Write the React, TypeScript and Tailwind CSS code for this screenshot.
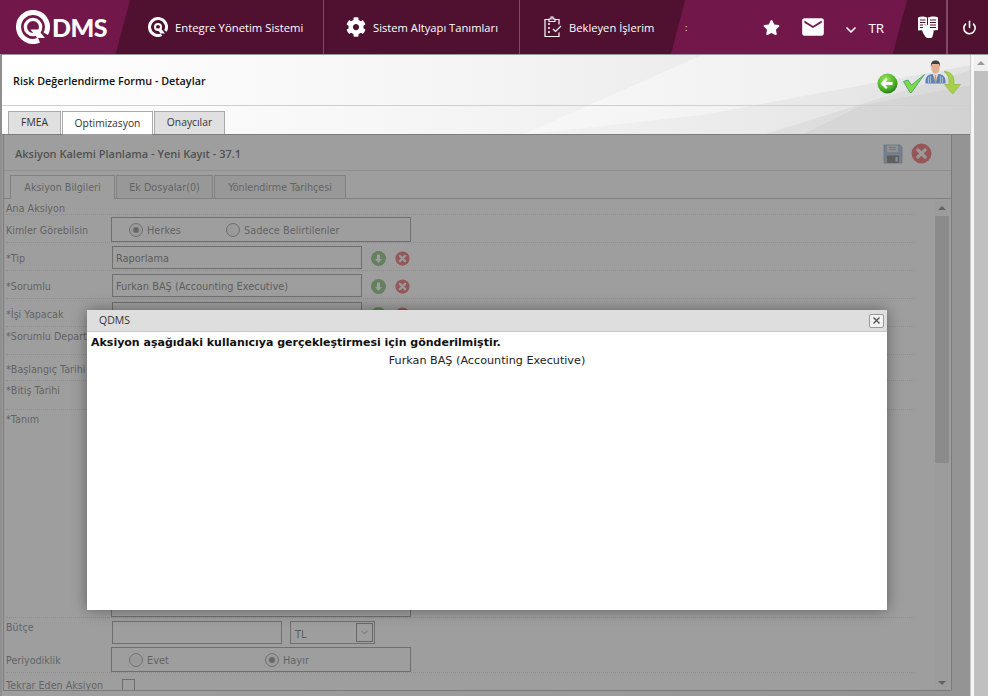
import React from 'react';
import { FaCog, FaStar } from 'react-icons/fa';
import { MdMail } from 'react-icons/md';
import { ChevronDown, Power } from 'lucide-react';

const sans = 'font-["Open_Sans","Noto_Sans",sans-serif]';
const deja = 'font-["DejaVu_Sans",sans-serif]';

function QMark({ size = 20, hole = 5 }: { size?: number; hole?: number }) {
  return (
    <svg width={size} height={size} viewBox="0 0 40 40" fill="none">
      <path d="M27 35.500A17 17 0 1 1 35 28" stroke="#fff" strokeWidth="6" />
      <circle cx="20" cy="20" r={hole + 3} stroke="#fff" strokeWidth="4" />
      <path d="M17 23h9l8 10h-9z" fill="#fff" />
    </svg>
  );
}

function ClipboardIcon() {
  return (
    <svg width="20" height="22" viewBox="0 0 20 22" fill="none" stroke="#fff" strokeWidth="1.2">
      <path d="M6 3.500H2v17h14v-4M12 3.500h4v5" />
      <path d="M6 5.500V3h2V1h2v2h2v2.500z" />
      <path d="M5 8h2M5 12h2M5 16h2" strokeWidth="1.6" />
      <path d="M10 13l2.500 2.500L18 10" />
    </svg>
  );
}

function BookHand() {
  return (
    <svg width="22" height="24" viewBox="0 0 22 24">
      <path d="M1 2.500C4 1 8 1 10.500 3 13 1 18 1 21 2.500V15l-5 .5-2 2-5-1-2-1.500-6 .500z" fill="#fff" />
      <path
        d="M3 5h5.500M3 7.500h5.500M3 10h5.500M3 12.500h4M13 5h6M13 7.500h6M13 10h6M13 12.500h6"
        stroke="#4f112f"
        strokeWidth="1"
      />
      <path d="M10.500 3v10" stroke="#4f112f" strokeWidth="1" />
      <path
        d="M6 9.500c1-.5 1.500 0 2 1l1 3 .5-3c.5-1 1.500-1 2 0l.5 3 3.500 1c1 .5 1.500 1.500 1 3l-1 4c-.5 1-1 1.500-2 1.500H11c-1.500 0-2.500-1-3-2l-2-3-1-3c0-1 .5-2 1-2.500z"
        fill="#fff"
      />
    </svg>
  );
}

function BackIcon() {
  return (
    <svg width="21" height="21" viewBox="0 0 21 21">
      <defs>
        <radialGradient id="bk" cx="0.4" cy="0.3" r="0.8">
          <stop offset="0" stopColor="#9be85a" />
          <stop offset="0.6" stopColor="#4fb02a" />
          <stop offset="1" stopColor="#12700f" />
        </radialGradient>
      </defs>
      <circle cx="10.500" cy="10.500" r="10" fill="url(#bk)" />
      <path d="M3.500 10.500l5.500-5.500 1.500 1.500-2 2.500h7v3h-7l2 2.500L9 16z" fill="#fff" />
    </svg>
  );
}

function CheckIcon() {
  return (
    <svg width="22" height="19" viewBox="0 0 22 19">
      <path d="M0.500 7.500L5 6l3.500 5L21.500 0.500 8.500 18.500H7z" fill="#7ddb45" stroke="#2f8f6f" strokeWidth="0.700" />
    </svg>
  );
}

function PersonIcon() {
  return (
    <svg width="21" height="24" viewBox="0 0 21 24">
      <path d="M0.500 23.500c-.5-6 1.500-8.500 6.500-9.500l3.500 1 3.500-1c5 1 7 3.500 6.500 9.500z" fill="#5f82bd" />
      <path d="M8 14l2.500 9 2.500-9-2.500 1z" fill="#f0f0f0" />
      <path d="M9.800 15h1.400l.4 6-1.100 2-1-2z" fill="#d99a2a" />
      <path d="M3.500 17v6M5.500 16v7M15.500 16v7M17.500 17v6" stroke="#c5d4ea" strokeWidth="0.700" />
      <ellipse cx="10.500" cy="8" rx="4.200" ry="5.500" fill="#e2b08e" />
      <path d="M6 7C5.500 2 7.500 .500 10.500 .500S15.500 2 15 7L14 4H7z" fill="#3f3f3f" />
    </svg>
  );
}

function DownArrowIcon() {
  return (
    <svg width="19" height="24" viewBox="0 0 19 24">
      <path d="M1 0.500c6 0 10 3 10 10v3h6.500L9.500 23 1.500 13.500H6v-4C6 5.500 4 3 1 .500z" fill="#a5cf4f" stroke="#8bb03a" strokeWidth="0.600" />
    </svg>
  );
}

function SaveIcon() {
  return (
    <svg width="20" height="20" viewBox="0 0 20 20">
      <path d="M1 1h16l2 2v16H1z" fill="#8ea8cf" stroke="#5f7fad" strokeWidth="0.800" />
      <rect x="4" y="1.500" width="11" height="6.500" fill="#d9d9d9" />
      <path d="M6 3.500h7M6 5.500h7" stroke="#8f8f8f" />
      <rect x="4" y="11.500" width="12" height="7.500" fill="#4a4a4a" />
      <rect x="12.500" y="13" width="2" height="4.500" fill="#d9d9d9" />
    </svg>
  );
}

function RoundX({ size = 20 }: { size?: number }) {
  return (
    <svg width={size} height={size} viewBox="0 0 20 20">
      <circle cx="10" cy="10" r="9.500" fill="#e8343a" />
      <path d="M6.500 6.500l7 7M13.500 6.500l-7 7" stroke="#f4f4f4" strokeWidth="3" strokeLinecap="round" />
    </svg>
  );
}

function RoundDown() {
  return (
    <svg width="15" height="15" viewBox="0 0 15 15">
      <circle cx="7.500" cy="7.500" r="7.500" fill="#5aa84a" />
      <path d="M7.500 12L4 8h2V3.500h3V8h2z" fill="#fff" />
    </svg>
  );
}

function Radio({ on }: { on?: boolean }) {
  return (
    <span className="flex w-[14px] h-[14px] rounded-full border border-[#777] bg-[#f4f4f4] items-center justify-center shrink-0">
      {on && <span className="w-[6px] h-[6px] rounded-full bg-[#666]" />}
    </span>
  );
}

function FieldRow({
  label,
  h,
  pt = 'pt-[9px]',
  line = true,
  children,
}: {
  label: string;
  h: string;
  pt?: string;
  line?: boolean;
  children?: React.ReactNode;
}) {
  return (
    <div className={`flex ${h} ${line ? 'border-b border-dotted border-[#cfcfcf]' : ''}`}>
      <div className={`w-[100px] shrink-0 whitespace-nowrap text-[9.6px] leading-[14px] ${pt} text-[#555]`}>
        {label}
      </div>
      {children}
    </div>
  );
}

function TextBox({ value, w = 'w-[250px]' }: { value?: string; w?: string }) {
  return (
    <div className={`${w} h-[23px] ml-[6px] mt-[3px] border border-[#787878] px-[3px] text-[9.8px] leading-[24px] text-[#444] whitespace-nowrap`}>
      {value}
    </div>
  );
}

function LookupButtons() {
  return (
    <div className="flex items-center gap-[9px] ml-[9px] mt-[8px] h-[15px]">
      <RoundDown />
      <RoundX size={15} />
    </div>
  );
}

function RadioBox({ left, right, leftOn, gap }: { left: string; right: string; leftOn?: boolean; gap: string }) {
  return (
    <div className="w-[300px] h-[25px] ml-[5px] mt-[2px] border border-[#787878] flex items-center pl-[17px] text-[9.8px] text-[#555]">
      <div className={`flex items-center gap-[4px] ${gap}`}>
        <Radio on={leftOn} />
        <span className="mt-[3px]">{left}</span>
      </div>
      <div className="flex items-center gap-[4px]">
        <Radio on={!leftOn} />
        <span className="mt-[3px]">{right}</span>
      </div>
    </div>
  );
}

function Form() {
  return (
    <div className="flex-1 min-w-0 overflow-hidden">
      <div className="text-[9.6px] leading-[14px] text-[#555] h-[16px] pt-[3px] border-b border-dotted border-[#cfcfcf]">
        Ana Aksiyon
      </div>
      <FieldRow label="Kimler Görebilsin" h="h-[28px]">
        <RadioBox left="Herkes" right="Sadece Belirtilenler" leftOn gap="w-[97px]" />
      </FieldRow>
      <FieldRow label="*Tip" h="h-[28px]">
        <TextBox value="Raporlama" />
        <LookupButtons />
      </FieldRow>
      <FieldRow label="*Sorumlu" h="h-[28px]">
        <TextBox value="Furkan BAŞ (Accounting Executive)" />
        <LookupButtons />
      </FieldRow>
      <FieldRow label="*İşi Yapacak" h="h-[28px]">
        <TextBox />
        <LookupButtons />
      </FieldRow>
      <FieldRow label="*Sorumlu Departman" h="h-[28px]" pt="pt-[3px]" />
      <FieldRow label="*Başlangıç Tarihi" h="h-[26px]" pt="pt-[8px]" />
      <FieldRow label="*Bitiş Tarihi" h="h-[29px]" pt="pt-[3px]" />
      <FieldRow label="*Tanım" h="h-[208px]" pt="pt-[3px]">
        <div className="w-[300px] h-[207px] ml-[5px] border border-[#787878]" />
      </FieldRow>
      <FieldRow label="Bütçe" h="h-[27px]" pt="pt-[3px]" line={false}>
        <TextBox w="w-[170px]" />
        <div className="w-[85px] h-[23px] ml-[8px] mt-[3px] border border-[#787878] relative pl-[4px] text-[9.8px] leading-[25px] text-[#444]">
          TL
          <span className="absolute right-[1px] top-[1px] w-[17px] h-[19px] border border-[#666] flex items-center justify-center">
            <ChevronDown size={11} color="#666" />
          </span>
        </div>
      </FieldRow>
      <FieldRow label="Periyodiklik" h="h-[28px]">
        <RadioBox left="Evet" right="Hayır" gap="w-[136px]" />
      </FieldRow>
      <FieldRow label="Tekrar Eden Aksiyon" h="h-[18px]" pt="pt-[6px]" line={false}>
        <span className="w-[13px] h-[13px] ml-[16px] mt-[6px] border border-[#777]" />
      </FieldRow>
    </div>
  );
}

export default function App() {
  return (
    <div className={`w-[988px] h-[696px] overflow-hidden relative bg-white ${sans}`}>
      {/* üst menü */}
      <header className="h-[55px] flex bg-[#4f112f] border-b border-[#9a9a9a] text-white relative">
        <div className="w-[130px] flex items-center pl-[16px] gap-[2px] bg-[#72174a] [clip-path:polygon(0_0,100%_0,89%_100%,0_100%)]">
          <QMark size={34} hole={6} />
          <span className='font-["Lato",sans-serif] font-black text-[25px] leading-none tracking-[-0.5px]'>DMS</span>
        </div>
        <div className="w-[194px] flex items-center pl-[18px] gap-[7px] text-[11.3px] border-r border-[#7b4a63]">
          <QMark size={20} hole={3} />
          <span className="mt-[2px]">Entegre Yönetim Sistemi</span>
        </div>
        <div className="w-[196px] flex items-center pl-[22px] gap-[7px] text-[11.2px] border-r border-[#7b4a63]">
          <FaCog size={20} />
          <span className="mt-[2px]">Sistem Altyapı Tanımları</span>
        </div>
        <div className="w-[152px] flex items-center pl-[23px] gap-[6px] text-[11.2px]">
          <ClipboardIcon />
          <span className="mt-[2px]">Bekleyen İşlerim</span>
        </div>
        <div className="w-[236px] -ml-[1px] flex items-center bg-[#72174a] [clip-path:polygon(6%_0,100%_0,94%_100%,0_100%)] text-white">
          <span className="ml-[14px] text-[9px] leading-none">:</span>
          <FaStar size={17} className="ml-[76px]" />
          <MdMail size={26} className="ml-[20px]" />
          <ChevronDown size={16} strokeWidth={2.5} className="ml-[17px] mt-[5px]" />
          <span className="ml-[9px] text-[13.5px] mt-[3px]">TR</span>
        </div>
        <div className="flex-1 flex">
          <div className="w-[41px] flex items-center justify-center pl-[3px] border-r-2 border-[#7b4a63]">
            <BookHand />
          </div>
          <div className="flex-1 flex items-center justify-center pl-[2px]">
            <Power size={15} strokeWidth={2.5} />
          </div>
        </div>
      </header>

      <div className="flex h-[641px]">
        <div className="w-[971px] border-l-2 border-[#8f8f8f] border-r border-r-[#c9c9c9] bg-gradient-to-r from-white via-[#f4f4f4] to-[#e2e2e2] relative overflow-hidden">
          {/* arka plan şekilleri */}
          <svg className="absolute inset-0" width="969" height="641">
            <path d="M520 80L700 0H969L969 10 700 60z" fill="#fff" opacity="0.4" />
            <path d="M760 80L969 15V80z" fill="#000" opacity="0.04" />
            <path d="M800 80L860 50 969 30V80z" fill="#000" opacity="0.03" />
          </svg>
          <div className="relative h-[51px] flex items-center justify-between border-b border-[#cfcfcf] pl-[11px] pr-[8px]">
            <span className="text-[10.8px] font-semibold text-[#111] mt-[2px]">Risk Değerlendirme Formu - Detaylar</span>
            <div className="flex items-start mt-[8px]">
              <BackIcon />
              <span className="ml-[5px] mt-[1px]"><CheckIcon /></span>
              <span className="-mt-[13px]"><PersonIcon /></span>
              <span className="-mt-[2px] -ml-[3px]"><DownArrowIcon /></span>
            </div>
          </div>
          <nav className="relative h-[29px] flex items-end pl-[6px] gap-[1px] text-[10.3px] text-[#333] border-b border-[#a0a0a0]">
            <div className="h-[23px] w-[53px] bg-[#e0e0e0] border border-b-0 border-[#aaa] flex items-center justify-center">FMEA</div>
            <div className="h-[24px] w-[91px] bg-white border border-b-0 border-[#aaa] flex items-center justify-center -mb-[1px]">Optimizasyon</div>
            <div className="h-[23px] w-[71px] bg-[#e0e0e0] border border-b-0 border-[#aaa] flex items-center justify-center">Onaycılar</div>
          </nav>

          <section className="relative w-[949px] h-[556px] ml-[1px] border-r border-b border-l border-[#999] bg-white rounded-br-[2px]">
            <div className="h-[36px] flex items-center justify-between border-b border-[#d5d5d5] pl-[11px] pr-[19px]">
              <span className="text-[11px] font-semibold text-[#222] mt-[3px]">Aksiyon Kalemi Planlama - Yeni Kayıt - 37.1</span>
              <div className="flex items-center gap-[8px] mt-[2px]">
                <SaveIcon />
                <RoundX size={21} />
              </div>
            </div>
            <div className={`h-[28px] flex items-end pl-[6px] gap-[1px] text-[9.6px] text-[#555] border-b border-[#aaa] ${deja}`}>
              <div className="h-[24px] w-[105px] bg-white border border-b-0 border-[#aaa] flex items-center justify-center -mb-[1px] pt-[2px]">Aksiyon Bilgileri</div>
              <div className="h-[23px] w-[97px] bg-[#eee] border border-b-0 border-[#aaa] flex items-center justify-center pt-[2px]">Ek Dosyalar(0)</div>
              <div className="h-[23px] w-[132px] bg-[#eee] border border-b-0 border-[#aaa] flex items-center justify-center pt-[2px]">Yönlendirme Tarihçesi</div>
            </div>
            <div className={`flex h-[491px] pl-[2px] ${deja}`}>
              <Form />
              <div className="w-[14px] ml-[21px] mr-[2px] flex flex-col items-center bg-[#f8f8f8]">
                <div className="h-[17px] flex items-center">
                  <span className="w-0 h-0 border-x-[4px] border-x-transparent border-b-[4px] border-b-[#555]" />
                </div>
                <div className="w-full h-[247px] bg-[#c8c8c8]" />
                <div className="flex-1" />
                <div className="h-[14px] flex items-center">
                  <span className="w-0 h-0 border-x-[4px] border-x-transparent border-t-[4px] border-t-[#555]" />
                </div>
              </div>
            </div>
          </section>

          {/* karartma */}
          <div className="absolute left-0 right-0 top-[79px] bottom-0 bg-[#6a6a6a]/65" />
        </div>

        <div className="flex-1 bg-[#f6f6f6] flex justify-end">
          <div className="w-[14px] h-full bg-[#c0c0c0] flex flex-col items-center">
            <div className="h-[16px] w-full bg-[#f0f0f0] flex items-center justify-center">
              <span className="w-0 h-0 border-x-[4px] border-x-transparent border-b-[4px] border-b-[#999]" />
            </div>
          </div>
        </div>
      </div>

      {/* mesaj penceresi */}
      <div className="absolute left-[87px] top-[310px] w-[800px] h-[300px] bg-white shadow-[0_0_14px_rgba(0,0,0,0.4)] flex flex-col">
        <div className="h-[22px] bg-[#dedede] border-b border-[#c8c8c8] flex items-center justify-between pl-[12px] pr-[3px] text-[10.5px] text-[#333]">
          <span className="mt-[1px]">QDMS</span>
          <span className="w-[15px] h-[14px] border border-[#999] rounded-[2px] bg-[#f2f2f2] flex items-center justify-center">
            <svg width="9" height="9" viewBox="0 0 9 9">
              <path d="M1.500 1.500l6 6M7.500 1.500l-6 6" stroke="#555" strokeWidth="1.400" />
            </svg>
          </span>
        </div>
        <div className={`${deja} text-[#222] pt-[3px]`}>
          <p className="font-bold text-[11px] text-[#111] pl-[4px] leading-[15px]">Aksiyon aşağıdaki kullanıcıya gerçekleştirmesi için gönderilmiştir.</p>
          <p className="text-center text-[11.2px] leading-[15px] pt-[3px]">Furkan BAŞ (Accounting Executive)</p>
        </div>
      </div>
    </div>
  );
}
